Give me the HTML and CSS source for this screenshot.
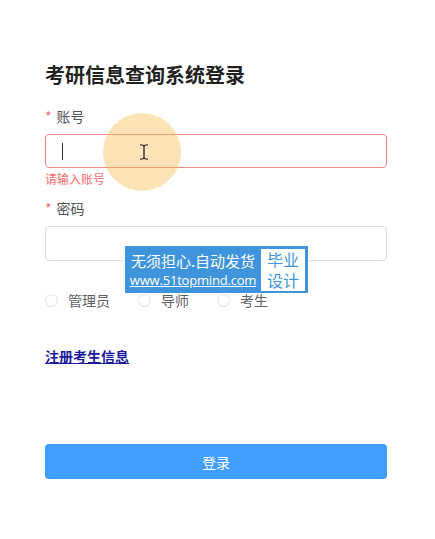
FILE: index.html
```html
<!DOCTYPE html>
<html>
	<head>
		<meta charset="UTF-8">
		<title>考研信息查询系统登录</title>
		<link rel="stylesheet" href="styles.css">
	</head>
	<body>
		<div id="page">
			<div class="login">
				<h2 class="title">考研信息查询系统登录</h2>
				<div class="item">
					<label class="label"><span class="star">*</span>账号</label>
					<div class="input is-error"><span class="caret"></span></div>
					<div class="error">请输入账号</div>
				</div>
				<div class="item">
					<label class="label"><span class="star">*</span>密码</label>
					<div class="input"></div>
				</div>
				<div class="radios">
					<span class="radio"><i></i>管理员</span>
					<span class="radio"><i></i>导师</span>
					<span class="radio"><i></i>考生</span>
				</div>
				<a class="reg" href="#">注册考生信息</a>
				<button class="btn">登录</button>
			</div>

			<div class="click"></div>
			<svg class="cursor" width="10" height="16" viewBox="0 0 10 16">
				<path d="M1 1h3M6 1h3M5 2v12M1 15h3M6 15h3M4 1.5h2M4 14.5h2" stroke="#111" stroke-width="1.2" fill="none"/>
			</svg>

			<div class="mark">
				<div class="mark-left">
					<div class="mark-t1">无须担心.自动发货</div>
					<div class="mark-t2">www.51topmind.com</div>
				</div>
				<div class="mark-right">
					<div>毕业</div>
					<div>设计</div>
				</div>
			</div>
		</div>
	</body>
</html>
```

FILE: styles.css
```css
body,div,h2{
	margin: 0;
	padding: 0;
}
body{
	background: #fff;
	font-family: "Noto Sans CJK SC", "Noto Sans", sans-serif;
}

#page{
	position: relative;
	width: 435px;
	height: 539px;
	overflow: hidden;
}
.login{
	width: 342px;
	padding: 61px 0 0 45px;
	display: flex;
	flex-direction: column;
}
.title{
	font-size: 20px;
	line-height: 28px;
	font-weight: bold;
	color: #222;
	margin-bottom: 17px;
}
.item{
	display: flex;
	flex-direction: column;
}
.label{
	font-size: 14px;
	line-height: 20px;
	color: #555;
	margin-bottom: 8px;
}
.star{
	color: #f56c6c;
	margin-right: 5px;
}
.input{
	position: relative;
	height: 35px;
	box-sizing: border-box;
	border: 1px solid #dcdfe6;
	border-radius: 4px;
	background: #fff;
}
.input.is-error{
	border-color: #f0877f;
	height: 34px;
}
.caret{
	position: absolute;
	left: 16px;
	top: 8px;
	width: 1px;
	height: 17px;
	background: #333;
}
.error{
	font-size: 12px;
	line-height: 16px;
	color: #f56c6c;
	margin: 3px 0 11px;
}
.radios{
	display: flex;
	margin-top: 29px;
	font-size: 14px;
	line-height: 20px;
	color: #606266;
}
.radio{
	display: flex;
	align-items: center;
	margin-right: 28px;
}
.radio i{
	width: 13px;
	height: 13px;
	box-sizing: border-box;
	border: 1px solid #dcdfe6;
	border-radius: 50%;
	margin-right: 10px;
}
.reg{
	align-self: flex-start;
	margin-top: 36px;
	font-size: 14px;
	line-height: 20px;
	font-weight: bold;
	color: #1a1a9c;
	text-decoration: underline;
}
.btn{
	margin-top: 78px;
	height: 35px;
	border: 0;
	border-radius: 4px;
	background: #409eff;
	color: #fff;
	font-family: inherit;
	font-size: 14px;
}

.click{
	position: absolute;
	left: 103px;
	top: 113px;
	width: 78px;
	height: 78px;
	border-radius: 50%;
	background: rgba(250,190,90,0.45);
}
.cursor{
	position: absolute;
	left: 139px;
	top: 144px;
}

.mark{
	position: absolute;
	left: 125px;
	top: 246px;
	width: 183px;
	height: 47px;
	background: #3f95dc;
	display: flex;
	align-items: center;
	gap: 3px;
	padding: 0 3px 0 3px;
	box-sizing: border-box;
}
.mark-left{
	flex: 1;
	color: #fff;
	text-align: center;
	overflow: hidden;
}
.mark-t1{
	font-size: 15px;
	line-height: 21px;
}
.mark-t2{
	font-family: "Open Sans", sans-serif;
	font-size: 13px;
	line-height: 18px;
	letter-spacing: -0.2px;
	text-decoration: underline;
}
.mark-right{
	width: 44px;
	height: 42px;
	background: #fff;
	color: #3f95dc;
	font-size: 16px;
	line-height: 21px;
	text-align: center;
	box-sizing: border-box;
	display: flex;
	flex-direction: column;
	justify-content: center;
}
```
